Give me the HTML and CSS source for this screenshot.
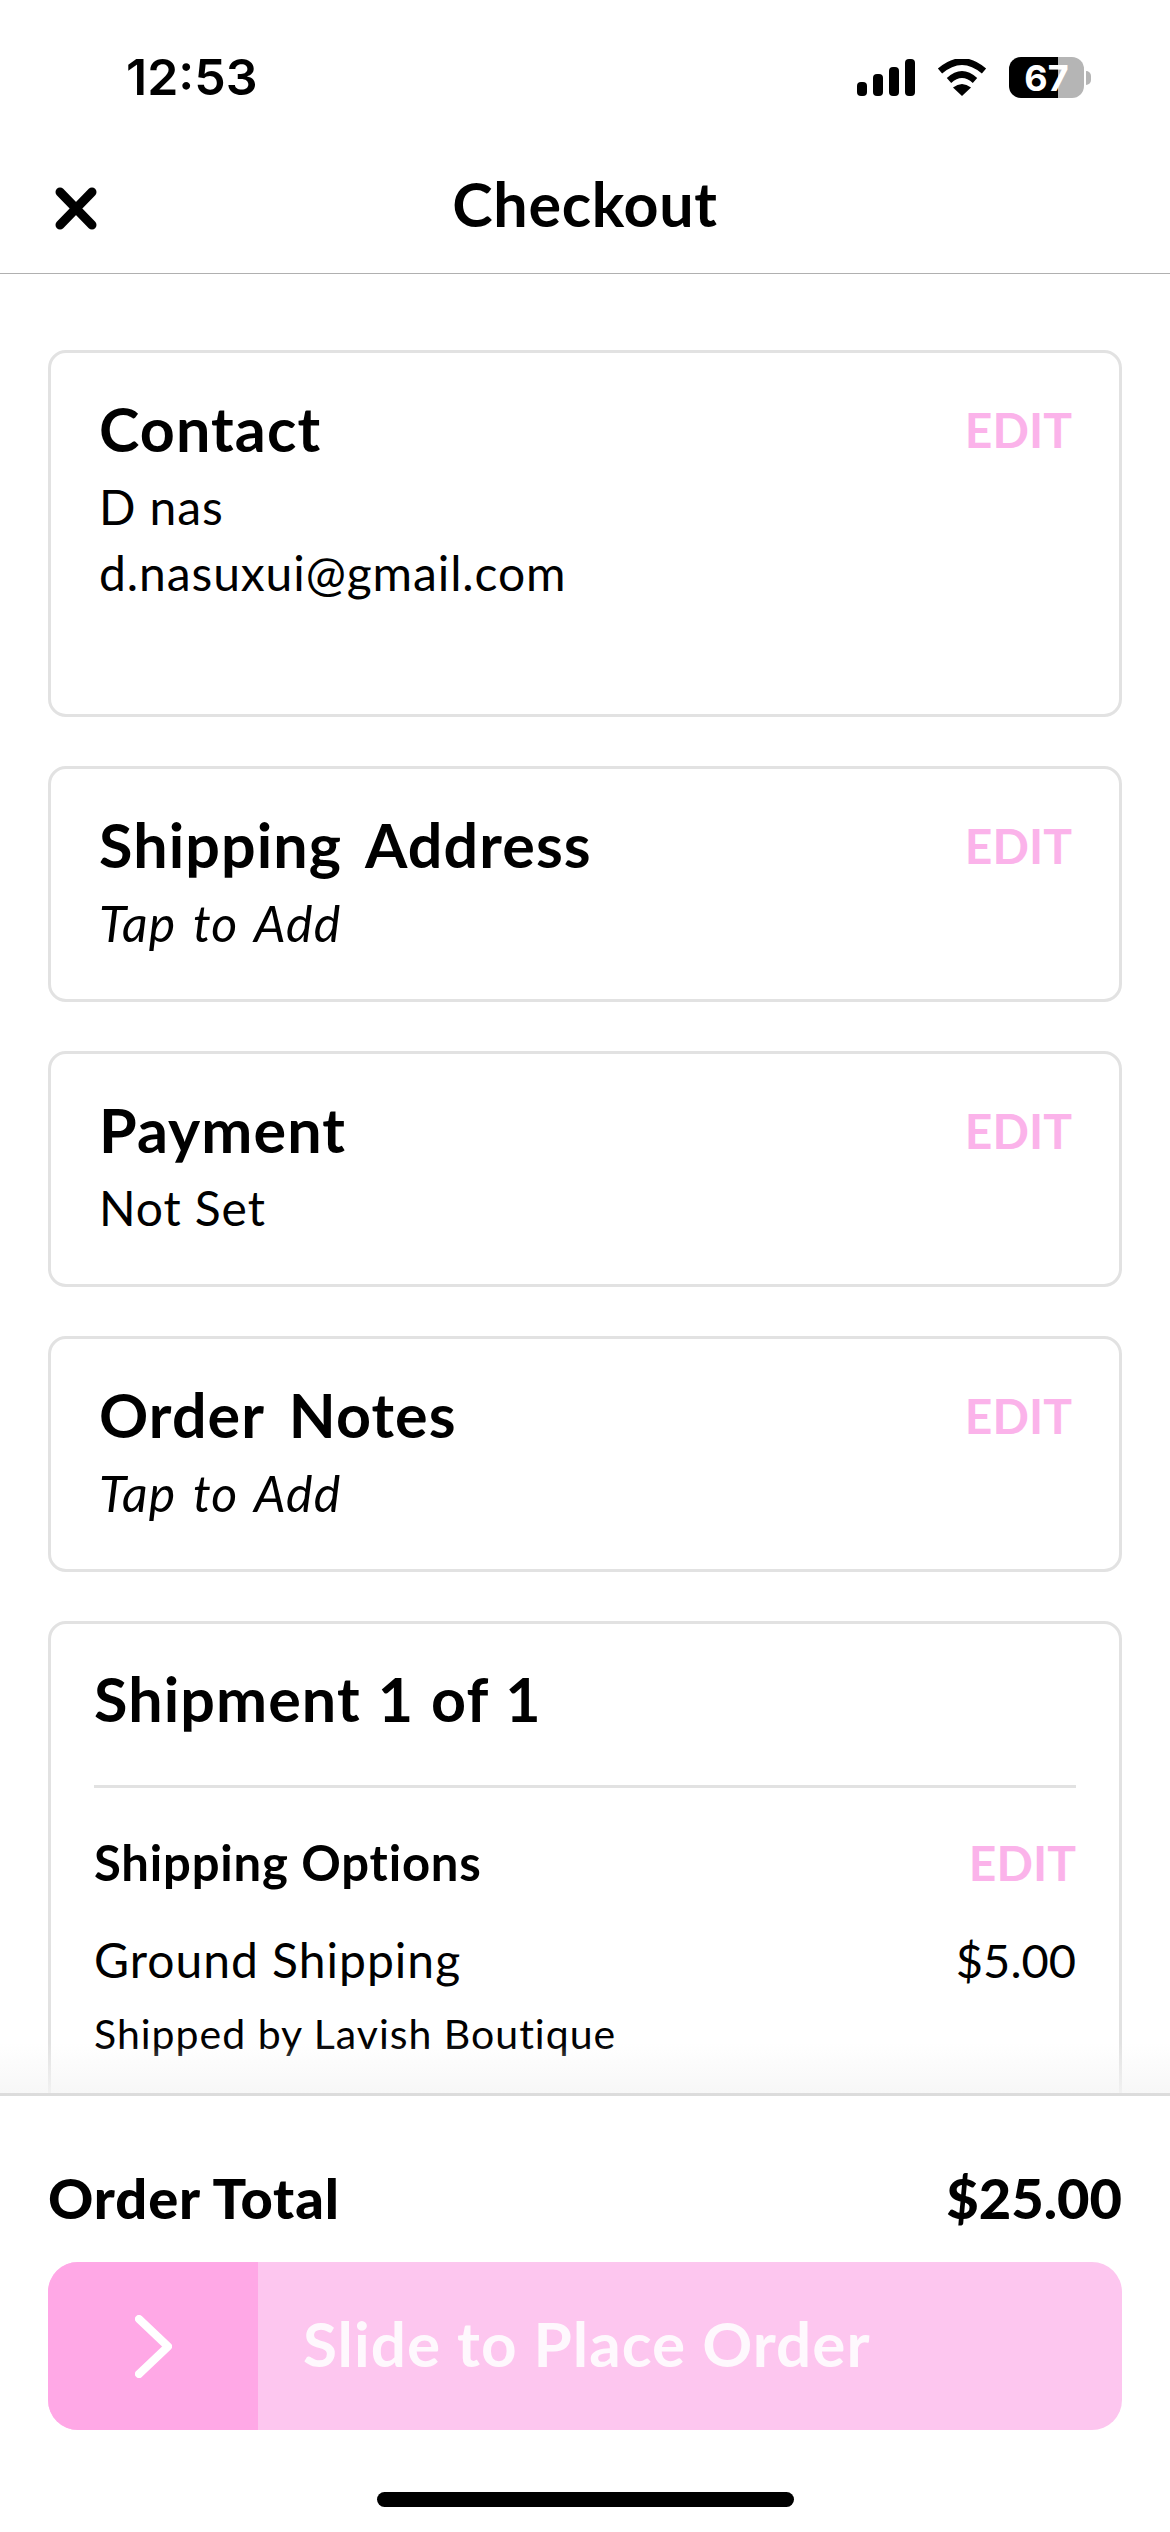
FILE: index.html
```html
<!DOCTYPE html>
<html lang="en">
<head>
  <meta charset="UTF-8">
  <title>Checkout</title>
  <link rel="stylesheet" href="styles.css">
</head>
<body>
  <div class="app">
    <div class="status-bar">
      <span class="time">12:53</span>
      <div class="status-icons">
        <svg class="signal" width="58" height="37" viewBox="0 0 58 37">
          <rect x="0" y="23" width="10" height="14" rx="4"/>
          <rect x="16" y="15" width="10" height="22" rx="4"/>
          <rect x="32" y="8" width="10" height="29" rx="4"/>
          <rect x="48" y="0" width="10" height="37" rx="4"/>
        </svg>
        <svg class="wifi" width="50" height="37" viewBox="0 0 50 37">
          <path d="M3 12 Q25 -7 47 12" stroke="#000" stroke-width="6.500" fill="none"/>
          <path d="M12 21.500 Q25 9.500 38 21.500" stroke="#000" stroke-width="6.500" fill="none"/>
          <path d="M25 37 L16 28.500 Q25 21.500 34 28.500 Z"/>
        </svg>
        <div class="battery">
          <div class="battery-body"><span class="battery-level">67</span></div>
          <div class="battery-cap"></div>
        </div>
      </div>
    </div>

    <div class="nav">
      <svg class="close" width="42" height="43" viewBox="0 0 42 43">
        <path d="M5 5 L37 38 M37 5 L5 38" stroke="#000" stroke-width="9" stroke-linecap="round" fill="none"/>
      </svg>
      <span class="nav-title">Checkout</span>
    </div>

    <div class="content">
      <section class="card card-contact">
        <div class="card-head">
          <h2>Contact</h2>
          <a class="edit">EDIT</a>
        </div>
        <p>D nas</p>
        <p>d.nasuxui@gmail.com</p>
      </section>

      <section class="card">
        <div class="card-head">
          <h2>Shipping Address</h2>
          <a class="edit">EDIT</a>
        </div>
        <p class="hint">Tap to Add</p>
      </section>

      <section class="card">
        <div class="card-head">
          <h2>Payment</h2>
          <a class="edit">EDIT</a>
        </div>
        <p>Not Set</p>
      </section>

      <section class="card">
        <div class="card-head">
          <h2>Order Notes</h2>
          <a class="edit">EDIT</a>
        </div>
        <p class="hint">Tap to Add</p>
      </section>

      <section class="card card-shipment">
        <h2 class="shipment-title">Shipment 1 of 1</h2>
        <div class="options">
          <div class="card-head">
            <h3>Shipping Options</h3>
            <a class="edit">EDIT</a>
          </div>
          <div class="option-row">
            <span class="option-name">Ground Shipping</span>
            <span>$5.00</span>
          </div>
          <div class="shipped-by">Shipped by Lavish Boutique</div>
        </div>
      </section>
      <div class="fade"></div>
    </div>

    <div class="footer">
      <div class="total">
        <span class="total-label">Order Total</span>
        <span>$25.00</span>
      </div>
      <div class="slider">
        <div class="thumb">
          <svg width="37" height="63" viewBox="0 0 37 63">
            <path d="M4 4 L33 31.500 L4 59" stroke="#fff" stroke-width="8" stroke-linecap="round" stroke-linejoin="round" fill="none"/>
          </svg>
        </div>
        <span class="slider-label">Slide to Place Order</span>
      </div>
      <div class="home-bar"></div>
    </div>
  </div>
</body>
</html>
```

FILE: styles.css
```css
html, body {
  margin: 0;
  padding: 0;
  background: #fff;
  color: #000;
  font-family: "Lato", "Open Sans", sans-serif;
}

.app {
  width: 1170px;
  height: 2532px;
  display: flex;
  flex-direction: column;
  overflow: hidden;
}

/* status bar */
.status-bar {
  height: 130px;
  box-sizing: border-box;
  padding: 52px 79px 0 126px;
  display: flex;
  justify-content: space-between;
  align-items: flex-start;
}

.time {
  font-family: "Inter", sans-serif;
  font-size: 50px;
  font-weight: 600;
  line-height: 50px;
}

.status-icons {
  display: flex;
  align-items: center;
  gap: 22px;
  margin-top: 5px;
}

.signal, .wifi {
  display: block;
}

.battery {
  display: flex;
  align-items: center;
  gap: 2px;
}

.battery-body {
  width: 75px;
  height: 41px;
  border-radius: 12px;
  background: linear-gradient(90deg, #000 66%, #b5b5b5 66%);
  display: flex;
  align-items: center;
  justify-content: center;
}

.battery-level {
  font-family: "Inter", sans-serif;
  font-size: 36px;
  font-weight: 700;
  color: #fff;
}

.battery-cap {
  width: 5px;
  height: 14px;
  background: #b5b5b5;
  border-radius: 0 7px 7px 0;
}

/* nav */
.nav {
  height: 144px;
  box-sizing: border-box;
  border-bottom: 1px solid #b0b0b0;
  position: relative;
  display: flex;
  align-items: center;
  justify-content: center;
  padding-top: 4px;
}

.close {
  position: absolute;
  left: 55px;
  top: 57px;
}

.nav-title {
  font-size: 61px;
  font-weight: 700;
  letter-spacing: 0.7px;
}

/* cards */
.content {
  flex: 1;
  min-height: 0;
  overflow: hidden;
  position: relative;
  padding: 76px 48px 0;
  display: flex;
  flex-direction: column;
  gap: 49px;
}

.card {
  flex-shrink: 0;
  box-sizing: border-box;
  height: 236px;
  border: 3px solid #e2e2e2;
  border-radius: 18px;
  padding: 39px 47px 0 48px;
}

.card-contact {
  height: 367px;
}

.card-head {
  display: flex;
  justify-content: space-between;
  align-items: center;
  margin-bottom: 8px;
}

h2 {
  margin: 0;
  font-size: 61px;
  line-height: 74px;
  font-weight: 700;
  letter-spacing: 1.1px;
  word-spacing: 9px;
}

h3 {
  margin: 0;
  font-size: 49px;
  line-height: 60px;
  font-weight: 700;
  letter-spacing: 0.8px;
}

.edit {
  font-size: 48px;
  font-weight: 700;
  color: #fbb3ea;
}

.card p {
  margin: 0;
  font-size: 48px;
  line-height: 66px;
  letter-spacing: 0.9px;
}

.card p.hint {
  font-size: 50px;
  font-style: italic;
  line-height: 66px;
  letter-spacing: 1.2px;
  word-spacing: 4px;
}

.card-shipment {
  height: 700px;
  padding: 38px 43px 0;
}

.shipment-title {
  padding-bottom: 49px;
  border-bottom: 3px solid #e2e2e2;
  word-spacing: 1px;
}

.options {
  padding-top: 44px;
}

.option-row {
  display: flex;
  justify-content: space-between;
  font-size: 47px;
  line-height: 60px;
  margin-top: 38px;
}

.option-name {
  font-size: 48px;
  letter-spacing: 1px;
}

.shipped-by {
  font-size: 41px;
  line-height: 52px;
  margin-top: 18px;
  letter-spacing: 1px;
}

.fade {
  position: absolute;
  left: 0;
  right: 0;
  bottom: 0;
  height: 50px;
  background: linear-gradient(rgba(245, 245, 245, 0), rgba(245, 245, 245, 0.8));
}

/* footer */
.footer {
  height: 439px;
  box-sizing: border-box;
  border-top: 3px solid #dcdcdc;
  padding: 0 48px;
  display: flex;
  flex-direction: column;
}

.total {
  display: flex;
  justify-content: space-between;
  align-items: center;
  margin-top: 66px;
  height: 70px;
  font-size: 56px;
  font-weight: 900;
}

.total-label {
  letter-spacing: 0.9px;
}

.slider {
  margin-top: 30px;
  height: 168px;
  border-radius: 30px;
  overflow: hidden;
  background: #fdc6ef;
  display: flex;
  align-items: center;
}

.thumb {
  width: 210px;
  height: 100%;
  background: #ffa8e6;
  display: flex;
  align-items: center;
  justify-content: center;
}

.slider-label {
  margin-left: 45px;
  margin-bottom: 6px;
  font-size: 62px;
  font-weight: 700;
  letter-spacing: 1px;
  color: #fff;
  opacity: 0.88;
}

.home-bar {
  align-self: center;
  width: 417px;
  height: 15px;
  margin-top: 62px;
  border-radius: 8px;
  background: #000;
}
```
